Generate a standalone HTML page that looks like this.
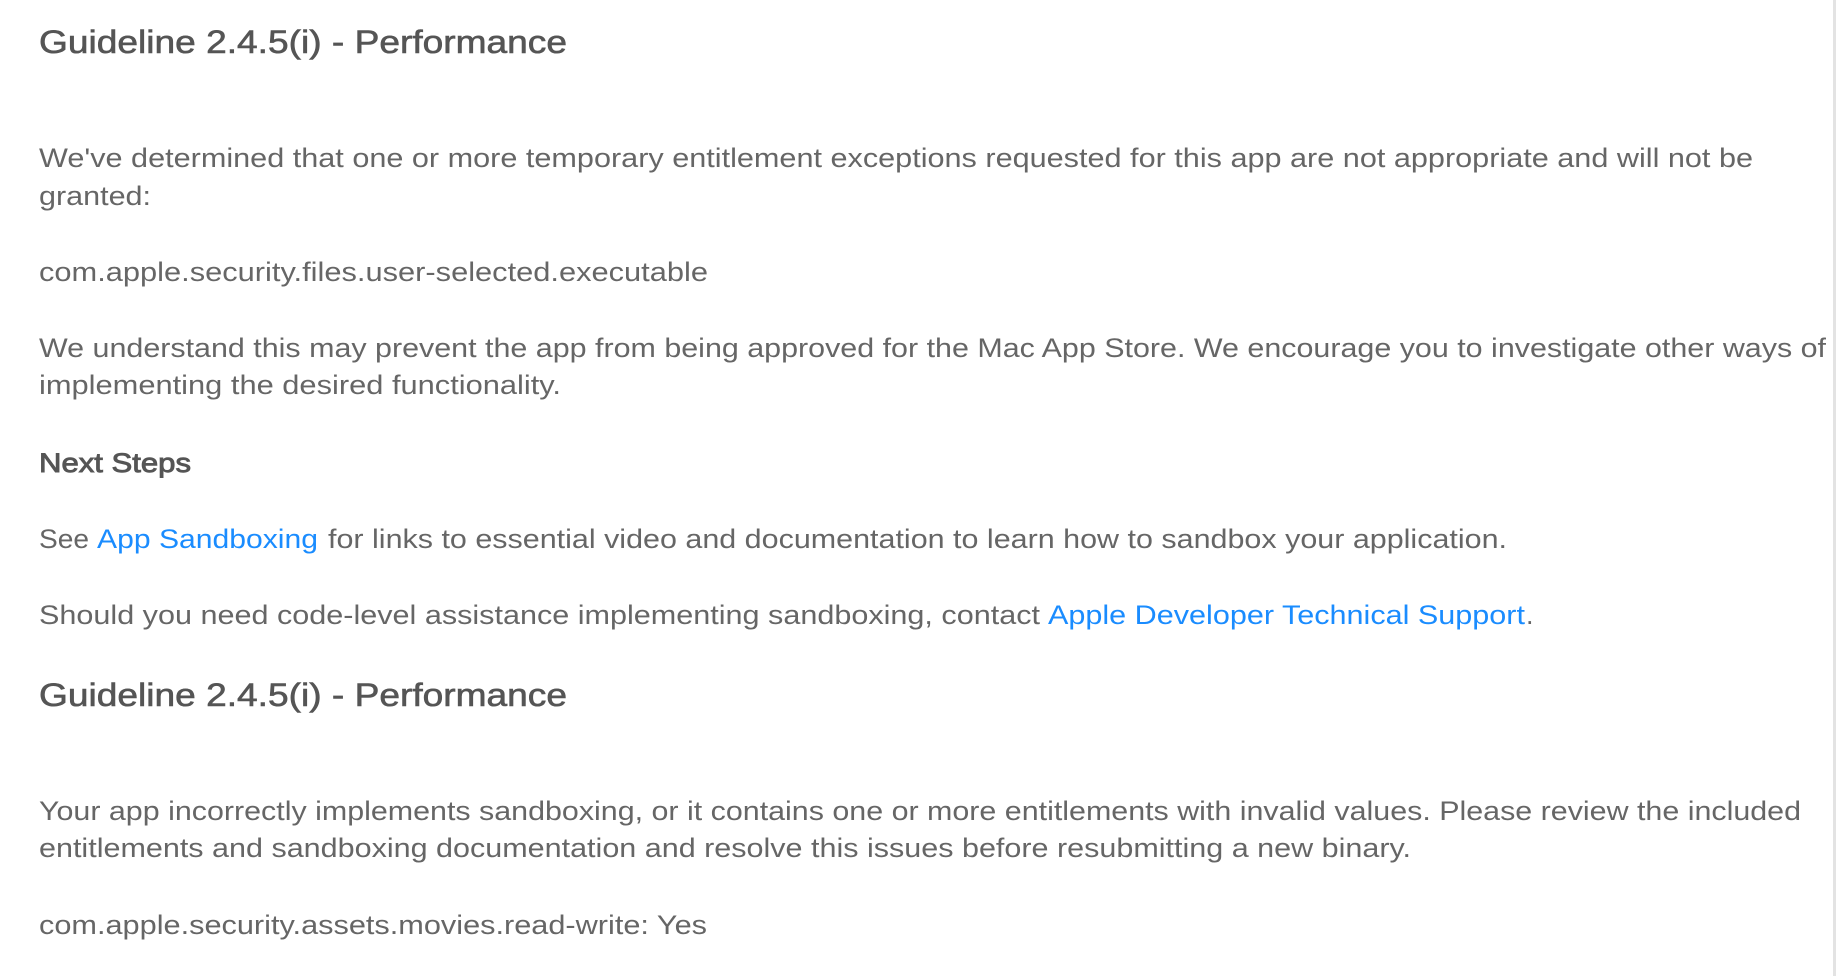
<!DOCTYPE html>
<html><head><meta charset="utf-8"><style>
html,body{margin:0;padding:0;background:#fff;width:1836px;height:976px;overflow:hidden}
svg{display:block}
text{font-family:"Liberation Sans",sans-serif;fill:#666}
.h{font-size:32px;fill:#555;stroke:#555;stroke-width:0.6}
.b{font-size:27px}
.s{font-size:27px;fill:#555;stroke:#555;stroke-width:0.9}
.l{fill:#1a8cff}
</style></head><body>
<svg width="1836" height="976" xmlns="http://www.w3.org/2000/svg">
<rect x="1833" y="0" width="3" height="976" fill="#e3e3e3"/>
<text class="h" x="39" y="53" textLength="528" lengthAdjust="spacingAndGlyphs">Guideline 2.4.5(i) - Performance</text>
<text class="b" x="39" y="167" textLength="1714" lengthAdjust="spacingAndGlyphs">We've determined that one or more temporary entitlement exceptions requested for this app are not appropriate and will not be</text>
<text class="b" x="39" y="205" textLength="112" lengthAdjust="spacingAndGlyphs">granted:</text>
<text class="b" x="39" y="281" textLength="669" lengthAdjust="spacingAndGlyphs">com.apple.security.files.user-selected.executable</text>
<text class="b" x="39" y="357" textLength="1787" lengthAdjust="spacingAndGlyphs">We understand this may prevent the app from being approved for the Mac App Store. We encourage you to investigate other ways of</text>
<text class="b" x="39" y="394" textLength="522" lengthAdjust="spacingAndGlyphs">implementing the desired functionality.</text>
<text class="s" x="39" y="472" textLength="152" lengthAdjust="spacingAndGlyphs">Next Steps</text>
<text class="b" x="39" y="548" textLength="50" lengthAdjust="spacingAndGlyphs">See</text>
<text class="b l" x="97" y="548" textLength="221" lengthAdjust="spacingAndGlyphs">App Sandboxing</text>
<text class="b" x="328" y="548" textLength="1179" lengthAdjust="spacingAndGlyphs">for links to essential video and documentation to learn how to sandbox your application.</text>
<text class="b" x="39" y="624" textLength="1001" lengthAdjust="spacingAndGlyphs">Should you need code-level assistance implementing sandboxing, contact</text>
<text class="b l" x="1048" y="624" textLength="477" lengthAdjust="spacingAndGlyphs">Apple Developer Technical Support</text>
<text class="b" x="1526" y="624">.</text>
<text class="h" x="39" y="706" textLength="528" lengthAdjust="spacingAndGlyphs">Guideline 2.4.5(i) - Performance</text>
<text class="b" x="39" y="820" textLength="1762" lengthAdjust="spacingAndGlyphs">Your app incorrectly implements sandboxing, or it contains one or more entitlements with invalid values. Please review the included</text>
<text class="b" x="39" y="857" textLength="1372" lengthAdjust="spacingAndGlyphs">entitlements and sandboxing documentation and resolve this issues before resubmitting a new binary.</text>
<text class="b" x="39" y="934" textLength="668" lengthAdjust="spacingAndGlyphs">com.apple.security.assets.movies.read-write: Yes</text>
</svg>
</body></html>
